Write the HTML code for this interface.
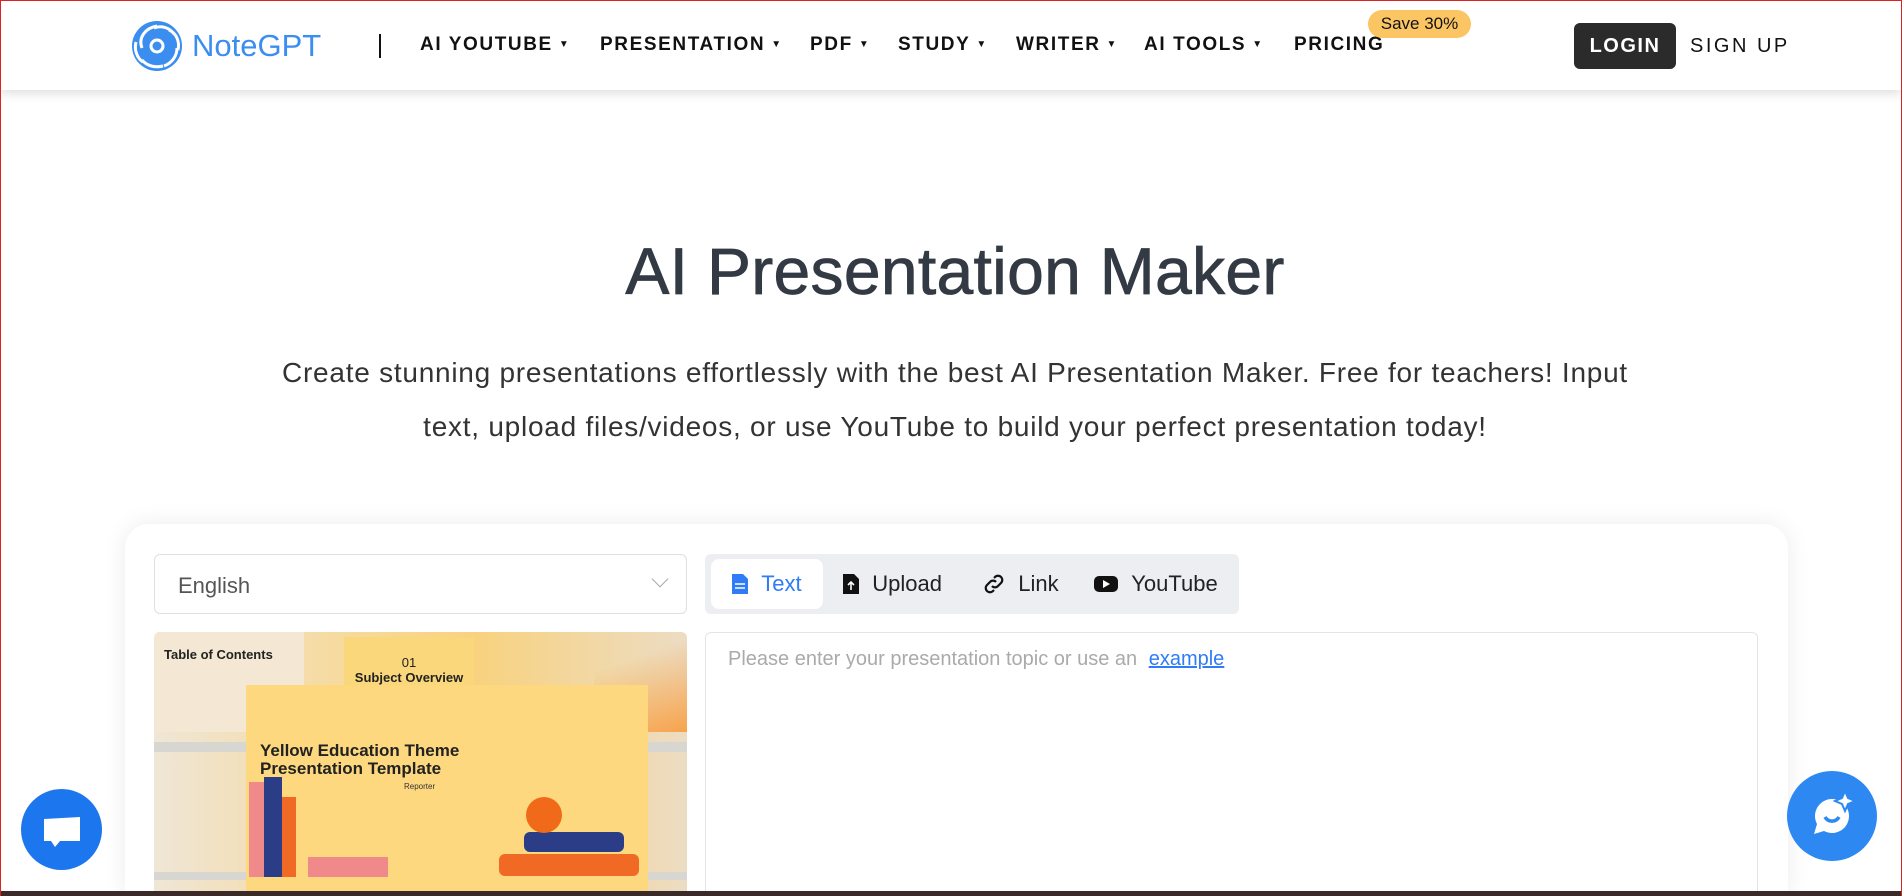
<!DOCTYPE html>
<html><head><meta charset="utf-8">
<style>
*{box-sizing:border-box;margin:0;padding:0}
html,body{width:1902px;height:896px;overflow:hidden;background:#fff;font-family:"Liberation Sans",sans-serif;position:relative}
.frame{position:absolute;left:0;top:0;width:1902px;height:896px;border:1px solid #d22;border-bottom:none;pointer-events:none;z-index:50}
.hdr{position:absolute;left:0;top:0;width:1902px;height:90px;background:#fff;box-shadow:0 4px 10px rgba(0,0,0,.12);z-index:5}
.logo{position:absolute;left:128px;top:20px;display:flex;align-items:center}
.logo span{font-size:31px;color:#3b8ef0;margin-left:6px}
.sep{position:absolute;left:379px;top:34px;width:2px;height:24px;background:#111}
.nav{position:absolute;top:34px;font-size:19px;letter-spacing:1.6px;color:#111;font-weight:bold;white-space:nowrap}
.nav i{font-style:normal;font-size:10px;margin-left:6px;vertical-align:3px}
.badge{position:absolute;left:1368px;top:10px;width:103px;height:28px;border-radius:14px;background:#fcc564;font-size:17px;text-align:center;line-height:28px;color:#111}
.login{position:absolute;left:1574px;top:23px;width:102px;height:46px;background:#2b2b2b;border-radius:6px;color:#fff;font-size:20px;font-weight:bold;letter-spacing:1.5px;text-align:center;line-height:46px}
.signup{position:absolute;left:1690px;top:35px;font-size:20px;letter-spacing:2.5px;color:#111}
h1{position:absolute;left:0;width:1910px;top:233px;text-align:center;font-size:66px;font-weight:normal;color:#333a44;letter-spacing:0.3px;-webkit-text-stroke:0.8px #333a44}
.sub{position:absolute;left:0;width:1910px;top:346px;text-align:center;font-size:28px;line-height:54px;color:#333;letter-spacing:0.75px;white-space:nowrap}
.card{position:absolute;left:125px;top:524px;width:1663px;height:372px;background:#fff;border-radius:24px 24px 0 0;box-shadow:0 0 24px rgba(0,0,0,.08)}
.sel{position:absolute;left:154px;top:554px;width:533px;height:60px;border:1px solid #dcdfe6;border-radius:6px;font-size:22px;color:#555;padding:18px 23px}
.sel b{position:absolute;right:20px;top:18px;width:12px;height:12px;border-right:1.5px solid #aaa;border-bottom:1.5px solid #aaa;transform:rotate(45deg)}
.tabs{position:absolute;left:705px;top:554px;width:534px;height:60px;background:#eceef1;border-radius:6px}
.tab{position:absolute;top:5px;height:50px;font-size:22px;color:#222;display:flex;align-items:center}
.tab.on{background:#fff;border-radius:8px;color:#2f7cf6;left:6px;width:112px;padding-left:20px}
.img{position:absolute;left:154px;top:632px;width:533px;height:264px;border-radius:6px 6px 0 0;overflow:hidden;background:#f1d59a}
.ta{position:absolute;left:705px;top:632px;width:1053px;height:264px;border:1px solid #e2e4ea;border-bottom:none;border-radius:6px 6px 0 0;padding:15px 22px;font-size:20px;color:#aaa}
.ta a{color:#2f7cf6;text-decoration:underline;margin-left:6px}
.bot{position:absolute;left:0;top:891px;width:1902px;height:5px;background:#3a2a2a;z-index:20}
.c1{position:absolute;left:21px;top:789px;width:81px;height:81px;border-radius:50%;background:#1c76ee;z-index:10}
.c2{position:absolute;left:1787px;top:771px;width:90px;height:90px;border-radius:50%;background:#2d88f1;z-index:10}
</style></head><body>
<div class="frame"></div>
<div class="hdr">
 <div class="logo"><svg width="58" height="52" viewBox="0 0 58 52"><circle cx="29" cy="26" r="25" fill="#3b8ef0"/><path d="M29 6c-12 2-19 12-15 22M46 14c-4-6-12-9-20-6M50 30c2-9-2-17-9-20M36 46c8-3 13-10 13-18M14 40c5 6 13 8 21 6M8 22c-2 8 1 16 7 20" stroke="#fff" stroke-width="3" fill="none"/><circle cx="29" cy="26" r="6" fill="none" stroke="#fff" stroke-width="3"/></svg><span>NoteGPT</span></div>
 <div class="sep"></div>
 <div class="nav" style="left:420px">AI YOUTUBE<i>▼</i></div>
 <div class="nav" style="left:600px">PRESENTATION<i>▼</i></div>
 <div class="nav" style="left:810px">PDF<i>▼</i></div>
 <div class="nav" style="left:898px">STUDY<i>▼</i></div>
 <div class="nav" style="left:1016px">WRITER<i>▼</i></div>
 <div class="nav" style="left:1144px">AI TOOLS<i>▼</i></div>
 <div class="nav" style="left:1294px">PRICING</div>
 <div class="badge">Save 30%</div>
 <div class="login">LOGIN</div>
 <div class="signup">SIGN UP</div>
</div>
<h1>AI Presentation Maker</h1>
<div class="sub">Create stunning presentations effortlessly with the best AI Presentation Maker. Free for teachers! Input<br>text, upload files/videos, or use YouTube to build your perfect presentation today!</div>
<div class="card"></div>
<div class="sel">English<b></b></div>
<div class="tabs">
 <div class="tab on"><svg width="18" height="22"><path d="M1 1h11l5 5v15H1z" fill="#2f7cf6"/><path d="M4 11h10M4 15h10" stroke="#fff" stroke-width="1.6"/></svg>&nbsp;&nbsp;Text</div>
 <div class="tab" style="left:137px"><svg width="18" height="22"><path d="M1 1h11l5 5v15H1z" fill="#111"/><path d="M9 17V9M6 12l3-3 3 3" stroke="#fff" stroke-width="1.6" fill="none"/></svg>&nbsp;&nbsp;Upload</div>
 <div class="tab" style="left:277px"><svg width="24" height="24" viewBox="0 0 24 24" fill="none" stroke="#111" stroke-width="2.2"><path d="M10 14a4 4 0 0 0 6 0l3-3a4 4 0 0 0-6-6l-1 1M14 10a4 4 0 0 0-6 0l-3 3a4 4 0 0 0 6 6l1-1"/></svg>&nbsp;&nbsp;Link</div>
 <div class="tab" style="left:388px"><svg width="26" height="20"><rect x="1" y="2" width="24" height="16" rx="5" fill="#111"/><path d="M10 6l7 4-7 4z" fill="#fff"/></svg>&nbsp;&nbsp;YouTube</div>
</div>
<div class="img">
 <div style="position:absolute;left:0;top:0;width:533px;height:264px;background:linear-gradient(90deg,#efe6d6,#f7d897 40%,#f8d27e 60%,#ecdcc3)"></div>
 <div style="position:absolute;left:0;top:0;width:150px;height:100px;background:#f4e8d4"></div>
 <div style="position:absolute;left:10px;top:15px;font-size:13px;font-weight:bold;color:#222">Table of Contents</div>
 <div style="position:absolute;left:190px;top:5px;width:130px;height:60px;background:#fbd77b;font-size:13px;text-align:center;padding-top:18px;color:#222">01<br><b>Subject Overview</b></div>
 <div style="position:absolute;left:440px;top:0;width:93px;height:100px;background:linear-gradient(160deg,#fff0 30%,#f7a34b)"></div>
 <div style="position:absolute;left:0;top:110px;width:533px;height:10px;background:#d8d6d0"></div>
 <div style="position:absolute;left:0;top:240px;width:533px;height:8px;background:#d8d6d0"></div>
 <div style="position:absolute;left:92px;top:53px;width:402px;height:220px;background:#fdd87e"></div>
 <div style="position:absolute;left:106px;top:110px;font-size:17px;font-weight:bold;line-height:18px;color:#222">Yellow Education Theme<br>Presentation Template</div>
 <div style="position:absolute;left:250px;top:150px;font-size:8px;color:#333">Reporter</div>
 <div style="position:absolute;left:95px;top:150px;width:22px;height:95px;background:#f08a8a"></div>
 <div style="position:absolute;left:110px;top:145px;width:18px;height:100px;background:#2b3d86"></div>
 <div style="position:absolute;left:128px;top:165px;width:14px;height:80px;background:#f06a25"></div>
 <div style="position:absolute;left:154px;top:225px;width:80px;height:20px;background:#f08a8a"></div>
 <div style="position:absolute;left:370px;top:200px;width:100px;height:20px;background:#2b3d86;border-radius:6px"></div>
 <div style="position:absolute;left:345px;top:222px;width:140px;height:22px;background:#f06a25;border-radius:6px"></div>
 <div style="position:absolute;left:372px;top:165px;width:36px;height:36px;border-radius:50%;background:#f06a1a"></div>
</div>
<div class="ta">Please enter your presentation topic or use an <a>example</a></div>
<div class="bot"></div>
<div class="c1"><svg width="81" height="81"><path d="M23 30l36-2 0 24-20 0-5 6-4-6-7 0z" fill="#fff"/></svg></div>
<div class="c2"><svg width="90" height="90"><path d="M45 28a17 17 0 1 1-8 32l-10 3 3-10a17 17 0 0 1 15-25z" fill="#fff"/><path d="M38 46a8 8 0 0 0 14 0" stroke="#2d88f1" stroke-width="3.5" fill="none"/><path d="M58 20l3 7 7 3-7 3-3 7-3-7-7-3 7-3z" fill="#fff" stroke="#2d88f1" stroke-width="2"/></svg></div>
</body></html>
